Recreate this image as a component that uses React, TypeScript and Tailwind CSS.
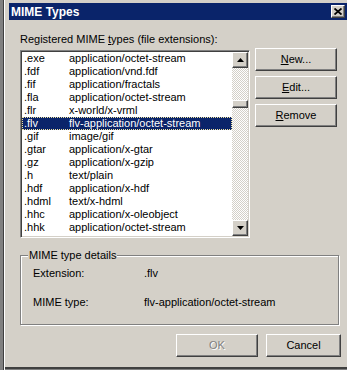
import React from 'react'

const ROWS: [string, string][] = [
  ['.exe', 'application/octet-stream'],
  ['.fdf', 'application/vnd.fdf'],
  ['.fif', 'application/fractals'],
  ['.fla', 'application/octet-stream'],
  ['.flr', 'x-world/x-vrml'],
  ['.flv', 'flv-application/octet-stream'],
  ['.gif', 'image/gif'],
  ['.gtar', 'application/x-gtar'],
  ['.gz', 'application/x-gzip'],
  ['.h', 'text/plain'],
  ['.hdf', 'application/x-hdf'],
  ['.hdml', 'text/x-hdml'],
  ['.hhc', 'application/x-oleobject'],
  ['.hhk', 'application/octet-stream'],
]

const SELECTED = '.flv'

// raised 3d edge, win2k style
const raised =
  'border border-t-white border-l-white border-r-[#404040] border-b-[#404040] shadow-[inset_-1px_-1px_#808080,inset_1px_1px_#d4d0c8] bg-[#d4d0c8]'

function WinButton({
  children,
  width = 'w-[82px]',
  disabled = false,
}: {
  children: React.ReactNode
  width?: string
  disabled?: boolean
}) {
  return (
    <button
      type="button"
      className={`${raised} ${width} flex h-[23px] items-center justify-center text-[11px] leading-none ${
        disabled ? 'text-[#808080] [text-shadow:1px_1px_#fff]' : 'text-black'
      }`}
    >
      {children}
    </button>
  )
}

function Arrow({ up }: { up?: boolean }) {
  return (
    <svg width="7" height="4" viewBox="0 0 7 4">
      <path d={up ? 'M3.5 0 L7 4 L0 4 Z' : 'M0 0 L7 0 L3.5 4 Z'} fill="#000" />
    </svg>
  )
}

function ScrollBar() {
  return (
    <div className="flex w-[16px] flex-col bg-[repeating-conic-gradient(#fff_0_25%,#d4d0c8_0_50%)] bg-[length:2px_2px]">
      <div className={`${raised} flex h-[16px] w-[16px] items-center justify-center`}>
        <Arrow up />
      </div>
      <div className="h-[32px]" />
      <div className={`${raised} h-[8px] w-[16px]`} />
      <div className="flex-1" />
      <div className={`${raised} flex h-[16px] w-[16px] items-center justify-center`}>
        <Arrow />
      </div>
    </div>
  )
}

function MimeList() {
  return (
    <div className="mt-[2px] flex h-[188px] w-[230px] border border-t-[#808080] border-l-[#808080] border-r-white border-b-white shadow-[inset_1px_1px_#404040,inset_-1px_-1px_#d4d0c8] p-px">
      <div className="flex-1 overflow-hidden bg-white">
        {ROWS.map(([ext, type]) => {
          const sel = ext === SELECTED
          return (
            <div
              key={ext}
              className={`flex h-[13px] items-center text-[11px] leading-[13px] ${
                sel
                  ? 'border border-dotted border-[#f0e4a0] bg-[#0a246a] text-white'
                  : 'border border-transparent text-black'
              }`}
            >
              <span className="w-[46px] pl-px">{ext}</span>
              <span>{type}</span>
            </div>
          )
        })}
      </div>
      <ScrollBar />
    </div>
  )
}

export default function App() {
  return (
    <div className="flex h-[370px] w-[347px] overflow-hidden bg-[#d4d0c8] font-['Liberation_Sans',Arial,sans-serif]">
      {/* window edge on the left */}
      <div className="w-[3px] bg-[#808080]" />
      <div className="w-px bg-[#404040]" />
      <div className="w-px bg-white" />

      <div className="flex flex-1 flex-col">
        {/* Title bar */}
        <div className="ml-[4px] mt-[3px] flex h-[17px] items-center justify-between bg-[#0a246a] pl-[2px] pr-[2px]">
          <span className="text-[12px] font-bold leading-none text-white">MIME Types</span>
          <div className={`${raised} flex h-[13px] w-[14px] items-center justify-center`}>
            <svg width="8" height="7" viewBox="0 0 8 7">
              <path d="M0.5 0.5 L7.5 6.5 M7.5 0.5 L0.5 6.5" stroke="#000" strokeWidth="1.8" />
            </svg>
          </div>
        </div>

        {/* Body */}
        <div className="flex flex-1 flex-col pl-[15px] pt-[13px] text-[11px] text-black">
          <div className="h-[13px] leading-[13px]">
            Registered MIME <span className="underline">t</span>ypes (file extensions):
          </div>

          <div className="mt-[2px] flex gap-[5px]">
            <MimeList />
            <div className="flex flex-col gap-[5px]">
              <WinButton>
                <span className="underline">N</span>ew...
              </WinButton>
              <WinButton>
                <span className="underline">E</span>dit...
              </WinButton>
              <WinButton>
                <span className="underline">R</span>emove
              </WinButton>
            </div>
          </div>

          {/* Details group */}
          <div className="relative mt-[17px] h-[70px] w-[319px] border border-[#808080] shadow-[inset_1px_1px_#fff,1px_1px_#fff] pl-[12px] pt-[11px]">
            <span className="absolute left-[7px] top-[-7px] bg-[#d4d0c8] px-px leading-[13px]">
              MIME type details
            </span>
            <div className="flex h-[13px] leading-[13px]">
              <span className="w-[111px]">Extension:</span>
              <span>.flv</span>
            </div>
            <div className="mt-[16px] flex h-[13px] leading-[13px]">
              <span className="w-[111px]">MIME type:</span>
              <span>flv-application/octet-stream</span>
            </div>
          </div>

          <div className="mt-[9px] flex justify-end gap-[8px] pr-[6px]">
            <WinButton disabled>OK</WinButton>
            <WinButton width="w-[75px]">Cancel</WinButton>
          </div>
        </div>

        <div className="h-[2px] bg-[#404040]" />
        <div className="h-px bg-[#808080]" />
      </div>
    </div>
  )
}
